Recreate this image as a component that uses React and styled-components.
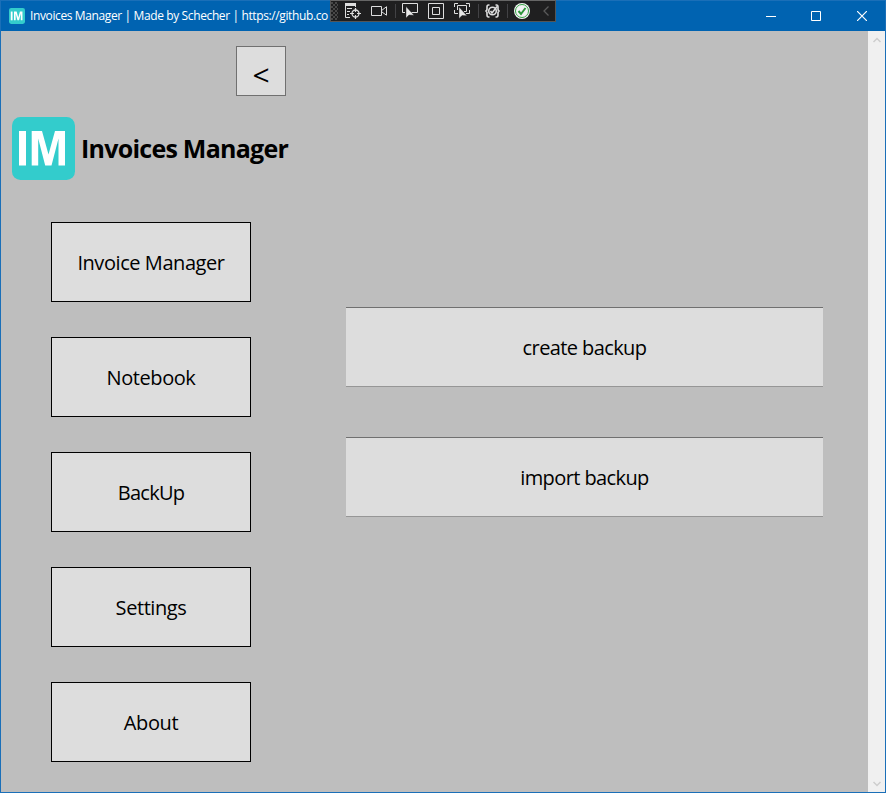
import React from "react";
import styled, { createGlobalStyle } from "styled-components";

const GlobalStyle = createGlobalStyle`
  * { box-sizing: border-box; }
  html, body { margin: 0; padding: 0; overflow: hidden; }
  body { font-family: "Open Sans", "Segoe UI", "Noto Sans", sans-serif; color: #000; }
`;

const Window = styled.div`
  position: relative;
  display: flex;
  flex-direction: column;
  width: 886px;
  height: 793px;
  border: 1px solid #1a6fb8;
  background: #bebebe;
`;

const TitleBar = styled.header`
  display: flex;
  align-items: center;
  flex: 0 0 30px;
  padding-left: 8px;
  background: #0063b1;
  color: #fff;
`;

const TitleText = styled.span`
  width: 301px;
  margin-left: 5px;
  white-space: nowrap;
  font-size: 12px;
  line-height: 18px;
  letter-spacing: -0.38px;
`;

const WindowControls = styled.div`
  display: flex;
  margin-left: auto;
`;

const ControlButton = styled.button`
  display: flex;
  align-items: center;
  justify-content: center;
  width: ${({ $width }) => $width || 46}px;
  height: 30px;
  padding: 0;
  border: 0;
  background: transparent;
`;

const DebugToolbar = styled.div`
  position: absolute;
  top: -1px;
  left: 329px;
  display: flex;
  align-items: flex-start;
  width: 226px;
  height: 22px;
  border: 1px solid #555;
  border-top: 1px solid #666;
  background: #1f1f20;
`;

const Grip = styled.div`
  width: 7px;
  height: 18px;
  margin: 1px 7px 0 0;
  background-image: radial-gradient(circle at 1px 1px, #606060 0.6px, transparent 0.9px),
    radial-gradient(circle at 3px 3px, #606060 0.6px, transparent 0.9px);
  background-size: 4px 4px;
`;

const ToolIcon = styled.svg`
  flex: none;
  display: block;
  margin-right: ${({ $gap }) => $gap}px;
  overflow: visible;
`;

const Separator = styled.div`
  flex: none;
  width: 1px;
  height: 14px;
  margin: 3px ${({ $after }) => $after}px 0 0;
  background: #424245;
`;

const Body = styled.div`
  display: flex;
  flex: 1;
  min-height: 0;
`;

const Sidebar = styled.aside`
  display: flex;
  flex-direction: column;
  width: 300px;
  padding-top: 15px;
`;

const BaseButton = styled.button`
  display: flex;
  align-items: center;
  justify-content: center;
  padding: 2px 0 0;
  border: 1px solid #000;
  background: #ddd;
  color: #000;
  font-family: inherit;
  font-size: 20px;
  line-height: 28px;
  white-space: nowrap;
`;

const BackButton = styled(BaseButton)`
  align-self: flex-end;
  width: 50px;
  height: 50px;
  margin-right: 15px;
  padding-top: 7px;
  border-color: #707070;
  font-size: 30px;
  font-weight: 500;
`;

const Brand = styled.div`
  display: flex;
  align-items: center;
  height: 63px;
  margin: 21px 0 42px 11px;
`;

const BrandName = styled.h1`
  margin: 0 0 1px 6px;
  font-size: 25px;
  line-height: 34px;
  font-weight: 700;
  letter-spacing: -0.75px;
  white-space: nowrap;
`;

const Nav = styled.nav`
  display: flex;
  flex-direction: column;
  gap: 35px;
  margin-left: 50px;
`;

const NavButton = styled(BaseButton)`
  width: 200px;
  height: 80px;
  letter-spacing: ${({ $spacing }) => $spacing}px;
`;

const Content = styled.main`
  display: flex;
  flex-direction: column;
  gap: 50px;
  flex: 1;
  padding: 276px 45px 0;
`;

const ActionButton = styled(BaseButton)`
  width: 477px;
  height: 80px;
  border-width: 1px 0;
  border-color: #707070 transparent #969696;
  letter-spacing: -0.6px;
`;

const Scrollbar = styled.div`
  display: flex;
  flex-direction: column;
  justify-content: space-between;
  align-items: center;
  width: 17px;
  padding: 6px 0 5px;
  background: #f0f0f0;
`;

const LogoMark = styled.svg`
  flex: none;
`;

function Logo({ size }) {
  return (
    <LogoMark width={size} height={size} viewBox="0 0 63 63">
      <rect width="63" height="63" rx="8.5" fill="#33cccc" />
      <rect x="7" y="14" width="7" height="34.500" fill="#fff" />
      <path d="M19.700 48.500V14H30L36.500 37.500 43 14H53V48.500H46.500V21.500L39.500 48.500H33.200L26.200 21.500V48.500Z" fill="#fff" />
    </LogoMark>
  );
}

const Cursor = ({ x, y }) => (
  <path transform={`translate(${x} ${y})`} d="M0 0v11.500l3-3 5 .2Z" fill="#e8e8e8" stroke="#1f1f20" strokeWidth=".4" />
);

function Tools() {
  return (
    <DebugToolbar>
      <Grip />
      <ToolIcon width="16" height="20" $gap={10} fill="none" stroke="#dedede">
        <path d="M0 3.500H11" strokeWidth="3" />
        <path d="M.5 4V16.500H5M2 7.500H7M2 10.500H5M2 13.500H4M10.500 4V6" />
        <circle cx="10.500" cy="12.500" r="3.500" strokeWidth="1.300" />
        <path d="M10.500 7v4M10.500 14v4M5 12.500h4M12 12.500h4" strokeWidth="1.200" />
      </ToolIcon>
      <ToolIcon width="16" height="20" $gap={8} fill="none" stroke="#dedede">
        <path d="M.5 5.500h10v9H.5ZM11 9.200l4.500-3.500v8.500L11 11" />
      </ToolIcon>
      <Separator $after={6} />
      <ToolIcon width="16" height="20" $gap={10} fill="none" stroke="#dedede">
        <path d="M3 11.500H.5v-9h15v9H9" />
        <Cursor x={4} y={5.5} />
      </ToolIcon>
      <ToolIcon width="16" height="20" $gap={10} fill="none" stroke="#dedede">
        <path d="M.5 2.500h15v15H.5ZM4.500 6.500h7v7h-7Z" />
      </ToolIcon>
      <ToolIcon width="16" height="20" $gap={8} fill="none" stroke="#dedede">
        <path d="M.5 6V2.500H4M12 2.500h3.500V6M.5 9v3.500H4M12 12.500h3.500V9M3.500 9V4.500h9v6H10" />
        <Cursor x={5} y={6} />
      </ToolIcon>
      <Separator $after={6} />
      <ToolIcon width="16" height="20" $gap={6} fill="none" stroke="#dedede">
        <path d="M4.500 4H3.500Q2 4 2 6v2Q2 10 .3 10 2 10 2 12v2q0 2 1.500 2h1M10.500 4h1Q13 4 13 6v2q0 2 1.700 2Q13 10 13 12v2q0 2-1.500 2h-1" strokeWidth="1.600" />
        <circle cx="7.500" cy="10" r="3.800" strokeWidth="1.600" />
        <path d="m5.500 10 1.500 2 5-6.500" strokeWidth="1.600" />
      </ToolIcon>
      <Separator $after={6} />
      <ToolIcon width="16" height="20" $gap={13} fill="none">
        <circle cx="8" cy="10" r="8" fill="#f3f3f3" />
        <circle cx="8" cy="10" r="6.500" stroke="#36a344" />
        <path d="m4.500 10 2.500 3 4.500-6" stroke="#2c963a" strokeWidth="2" />
      </ToolIcon>
      <ToolIcon width="6" height="20" $gap={0} fill="none" stroke="#5a5a5a" strokeWidth="1.300">
        <path d="M5.500 5.500 1 10l4.500 4.500" />
      </ToolIcon>
    </DebugToolbar>
  );
}

const navItems = [
  { label: "Invoice Manager", spacing: -0.43 },
  { label: "Notebook", spacing: -0.42 },
  { label: "BackUp", spacing: -0.75 },
  { label: "Settings", spacing: -0.42 },
  { label: "About", spacing: -0.4 },
];

export default function App() {
  return (
    <>
      <GlobalStyle />
      <Window>
        <TitleBar>
          <Logo size={16} />
          <TitleText>Invoices Manager | Made by Schecher | https://github.co</TitleText>
          <WindowControls>
            <ControlButton aria-label="Minimize" $width={47}>
              <svg width="10" height="10" stroke="#fff"><path d="M0 5.500h10" /></svg>
            </ControlButton>
            <ControlButton aria-label="Maximize" $width={44}>
              <svg width="10" height="10" fill="none" stroke="#fff"><path d="M.5.5h9v9h-9Z" /></svg>
            </ControlButton>
            <ControlButton aria-label="Close" $width={47}>
              <svg width="10" height="10" stroke="#fff" strokeWidth="1.200"><path d="m0 0 10 10M10 0 0 10" /></svg>
            </ControlButton>
          </WindowControls>
        </TitleBar>
        <Body>
          <Sidebar>
            <BackButton aria-label="Back">&lt;</BackButton>
            <Brand>
              <Logo size={63} />
              <BrandName>Invoices Manager</BrandName>
            </Brand>
            <Nav>
              {navItems.map(({ label, spacing }) => (
                <NavButton key={label} $spacing={spacing}>{label}</NavButton>
              ))}
            </Nav>
          </Sidebar>
          <Content>
            <ActionButton>create backup</ActionButton>
            <ActionButton>import backup</ActionButton>
          </Content>
          <Scrollbar>
            <svg width="8" height="6" fill="none" stroke="#cdcdcd" strokeWidth="1.500"><path d="m.5 5 3.500-3.500L7.500 5" /></svg>
            <svg width="8" height="6" fill="none" stroke="#cdcdcd" strokeWidth="1.500"><path d="m.5 1 3.500 3.500L7.500 1" /></svg>
          </Scrollbar>
        </Body>
        <Tools />
      </Window>
    </>
  );
}
